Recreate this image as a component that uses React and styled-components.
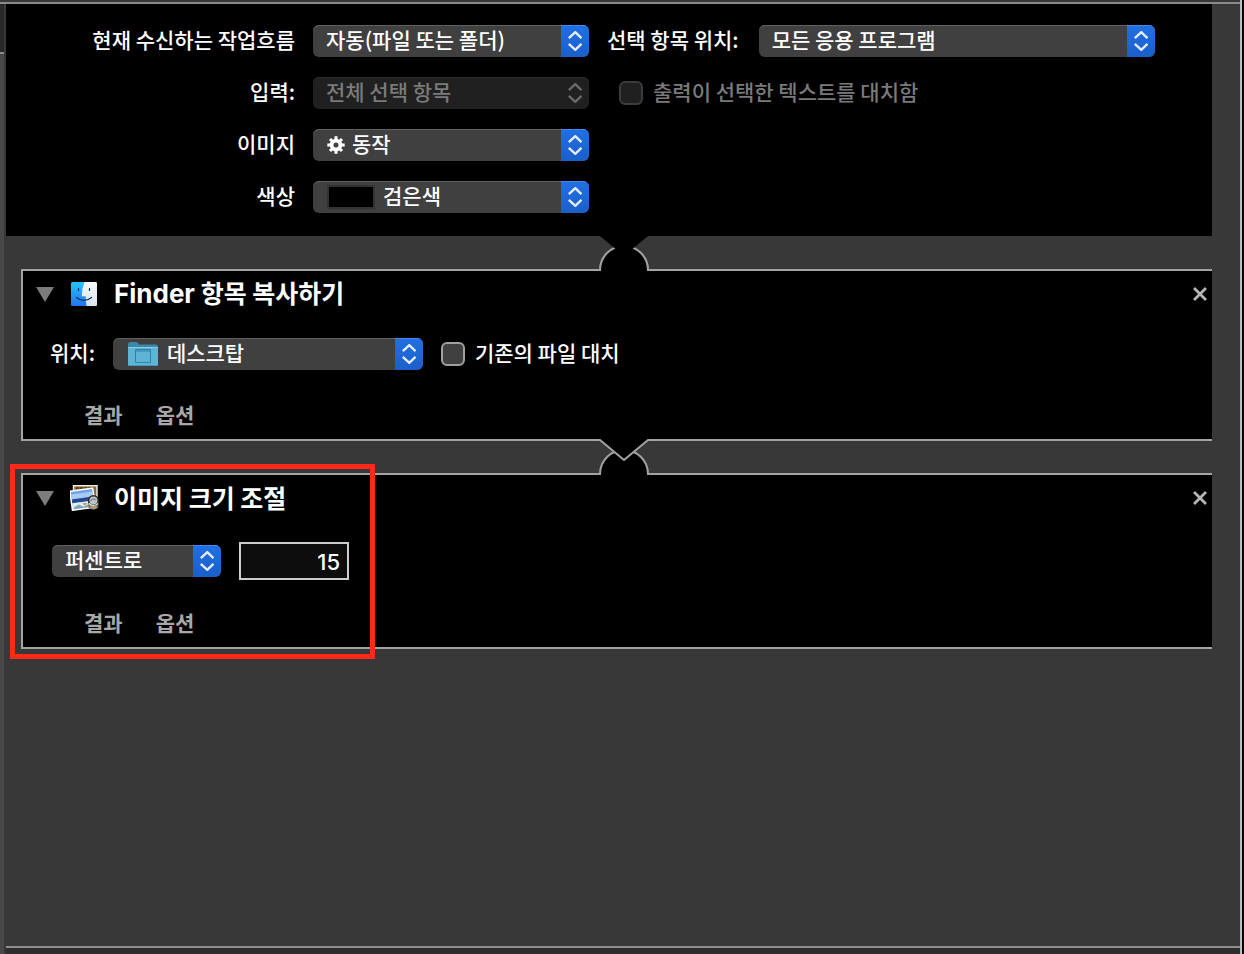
import React, { useState } from "react";
import styled, { createGlobalStyle, css } from "styled-components";

const GlobalStyle = createGlobalStyle`
  * {
    box-sizing: border-box;
  }
  body {
    margin: 0;
    background: #383838;
    color: #fff;
    font-family: "Noto Sans CJK KR", "Noto Sans", sans-serif;
    font-size: 21px;
    font-weight: 500;
    line-height: 32px;
  }
  button, input, select {
    font: inherit;
    color: inherit;
    margin: 0;
  }
`;

const Page = styled.div`
  display: flex;
  min-height: 100vh;
`;

const Window = styled.div`
  flex: 1;
  min-width: 0;
  display: flex;
  flex-direction: column;
`;

const TopEdge = styled.div`
  height: 4px;
  background: #363636;
  border-bottom: 2px solid #8a8a8a;
`;

const Body = styled.div`
  flex: 1;
  display: flex;
`;

const Rail = styled.div`
  width: 6px;
  display: flex;
  flex-direction: column;
  background: #484848;
  border-right: 2px solid #383838;
`;

const RailHead = styled.div`
  height: 50px;
  background: #282828;
  border-bottom: 2px solid #8a8a8a;
`;

const Canvas = styled.main`
  flex: 1;
  min-width: 0;
  display: flex;
  flex-direction: column;
  background: #383838;
`;

const StatusBar = styled.div`
  height: 8px;
  margin-top: auto;
  background: #2d2d2d;
  border-top: 2px solid #8f8f8f;
`;

const RightEdge = styled.div`
  width: 4px;
  background: #050607;
  border-left: 2px solid #bdbdbd;
`;

const Settings = styled.section`
  display: grid;
  grid-template-columns: 289px 276px 1fr;
  gap: 20px 18px;
  margin-right: 28px;
  padding: 21px 0 23px;
  background: #000;
`;

const FieldLabel = styled.label`
  height: 32px;
  line-height: 28px;
  text-align: ${(p) => (p.$right ? "right" : "left")};
  white-space: nowrap;
`;

const Inline = styled.div`
  display: flex;
  align-items: center;
  gap: 20px;
  padding-left: ${(p) => p.$indent || 0}px;
`;

const SelectBox = styled.div`
  position: relative;
  width: ${(p) => p.$width}px;
  height: 32px;
  border-radius: 6px;
  overflow: hidden;
  background: ${(p) => (p.$disabled ? "#202020" : "#404040")};
  box-shadow: inset 0 1px 0 ${(p) => (p.$disabled ? "#2c2c2c" : "#606060")};
`;

const NativeSelect = styled.select`
  appearance: none;
  display: block;
  width: 100%;
  height: 34px;
  margin-top: -2px;
  padding: 0 30px 2px ${(p) => p.$left}px;
  border: none;
  outline: none;
  background: transparent;
  &:disabled {
    color: #7a7a7a;
    opacity: 1;
  }
`;

const Leading = styled.span`
  position: absolute;
  left: 14px;
  top: 0;
  height: 32px;
  display: flex;
  align-items: center;
  pointer-events: none;
`;

const Cap = styled.span`
  position: absolute;
  right: 0;
  top: 0;
  width: 28px;
  height: 32px;
  display: flex;
  align-items: center;
  justify-content: center;
  pointer-events: none;
  color: #6a6a6a;
  ${(p) =>
    !p.$disabled &&
    css`
      color: #e6eefb;
      background: linear-gradient(#2170e4, #1b5fc9);
      box-shadow: inset 0 1px 0 #4588ea;
    `}
`;

const Swatch = styled.span`
  width: 48px;
  height: 24px;
  border: 2px solid #333;
  background: #000;
`;

const CheckLabel = styled.label`
  display: flex;
  align-items: center;
  gap: 10px;
  white-space: nowrap;
  color: ${(p) => (p.$disabled ? "#7a7a7a" : "#fff")};
`;

const CheckText = styled.span`
  height: 32px;
  line-height: 28px;
`;

const CheckInput = styled.input`
  appearance: none;
  width: 24px;
  height: 24px;
  border: 2px solid #a0a0a0;
  border-radius: 6px;
  background: #404040;
  &:checked {
    background: #1f6be0;
  }
  &:disabled {
    border-color: #3c3c3c;
    background: #202020;
  }
`;

const Connector = styled.div`
  position: relative;
  height: ${(p) => p.$height}px;
  svg {
    position: absolute;
    left: 50%;
    bottom: -2px;
    margin-left: -24px;
    z-index: 1;
  }
`;

const Card = styled.section`
  position: relative;
  margin: 0 28px 0 15px;
  padding-bottom: 7px;
  border: 2px solid #a3a3a3;
  border-right: none;
  background: #000;
`;

const CardHeader = styled.header`
  display: flex;
  align-items: center;
  height: 46px;
  padding: 0 5px 0 13px;
`;

const IconButton = styled.button`
  display: flex;
  padding: 0;
  border: none;
  background: none;
`;

const IconSlot = styled.span`
  display: flex;
  width: 30px;
  margin: 0 14px 0 16px;
`;

const Title = styled.h2`
  flex: 1;
  margin: 0;
  padding-bottom: 2px;
  font-size: 25px;
  font-weight: 700;
`;

const Latin = styled.span`
  font-family: Inter, sans-serif;
  font-size: 26px;
`;

const CardRow = styled.div`
  display: flex;
  align-items: center;
  gap: 18px;
  margin-top: 21px;
  padding-left: ${(p) => p.$indent}px;
`;

const CardFooter = styled.footer`
  display: flex;
  gap: 33px;
  margin-top: ${(p) => p.$gap}px;
  padding-left: 61px;
`;

const TextButton = styled.button`
  height: 32px;
  padding: 0 0 4px;
  border: none;
  background: none;
  color: #a8a8a8;
  font-weight: 700;
  line-height: 28px;
`;

const NumberInput = styled.input`
  width: 110px;
  height: 38px;
  padding: 2px 7px 0;
  border: 2px solid #cdcdcd;
  outline: none;
  background: #0d0d0d;
  font-family: Inter, sans-serif;
  font-size: 22px;
  text-align: right;
`;

const Highlight = styled.div`
  position: absolute;
  left: -13px;
  top: -11px;
  bottom: -12px;
  width: 365px;
  border: 5px solid #fd2a1c;
  pointer-events: none;
  z-index: 2;
`;

const Arrows = () => (
  <svg width="14" height="20" viewBox="0 0 14 20" fill="none" stroke="currentColor" strokeWidth="2.4">
    <path d="M.8 7.200 7.300 1.200l6.200 6M.8 12.800l6.500 6 6.200-6" />
  </svg>
);

const Gear = () => (
  <svg width="18" height="18" viewBox="0 0 18 18">
    <g stroke="#fff" strokeWidth="3">
      <path d="M9 .3v4M9 13.700v4M.3 9h4M13.700 9h4M3 3l2.800 2.800M12.200 12.200 15 15M15 3l-2.800 2.800M5.800 12.200 3 15" />
    </g>
    <circle cx="9" cy="9" r="4.400" fill="none" stroke="#fff" strokeWidth="3.800" />
  </svg>
);

const Folder = () => (
  <svg width="31" height="24" viewBox="-1 0 31 24">
    <path d="M0 2.500Q0 0 2 0h6q1.400 0 2 1l1 1.400H28q2 0 2 2V8H0z" fill="#3f87a8" />
    <rect y="5" width="30" height="19" rx="1.200" fill="#5fb4d6" />
    <path d="M0 5.500h30" stroke="#86cde8" />
    <path d="M0 23.500h30" stroke="#4797bb" />
    <path d="M7.500 7.500h15v13h-15zM7.500 9h15" fill="none" stroke="#2f81a8" />
  </svg>
);

const Finder = () => (
  <svg width="27" height="24" viewBox="-1 0 27 24">
    <defs>
      <linearGradient id="finderBlue" x2="0" y2="1">
        <stop offset="0" stopColor="#25c4fb" />
        <stop offset="1" stopColor="#2273ee" />
      </linearGradient>
      <linearGradient id="finderWhite" x2="0" y2="1">
        <stop offset="0" stopColor="#f7f8fb" />
        <stop offset="1" stopColor="#d8e2ee" />
      </linearGradient>
    </defs>
    <rect width="26" height="24" rx="1.500" fill="url(#finderBlue)" />
    <path d="M13.500 0H24.500q1.500 0 1.500 1.500v21q0 1.500-1.500 1.500H15.500q-1-4.500-.8-9.800H10.800Q11 6 13.500 0z" fill="url(#finderWhite)" />
    <path d="M7.500 6v3M18.500 6v3" stroke="#17304f" strokeWidth="1.200" />
    <path d="M5 15.200q8 6.400 16 0" fill="none" stroke="#17304f" strokeWidth="1.200" />
  </svg>
);

const Photos = () => (
  <svg width="30" height="26" viewBox="0 0 30 26">
    <rect x="3.500" y=".7" width="23.500" height="20" fill="#8a6a3d" stroke="#f3efe6" strokeWidth="1.400" />
    <path d="M6 3h18" stroke="#4f3515" strokeWidth="1.500" strokeDasharray="3 1" />
    <g transform="rotate(-8 12 15)">
      <rect x="1.200" y="4.800" width="23" height="19" fill="#6fa3e6" stroke="#fff" strokeWidth="1.600" />
      <path d="M2 8h21.400v5H2z" fill="#a8ccf3" />
      <path d="M2 13h21.400v4H2z" fill="#27478d" />
      <path d="M2 17h21.400v6H2z" fill="#e3ecef" />
      <path d="M3 21l5-2 5 3 5-2v3H3z" fill="#7fa6b5" />
      <path d="M12 18l5 1-3 2z" fill="#b99362" />
    </g>
    <path d="M18.500 17v5.500q5 4.500 9.800 0V17z" fill="#71634f" />
    <ellipse cx="23.400" cy="22" rx="3.500" ry="2" fill="#a99a80" />
    <circle cx="23.400" cy="15.500" r="4.800" fill="#b9c6cc" stroke="#2c2c2c" strokeWidth="1.600" />
    <path d="M20.500 16q3-4 5.500-.8" fill="none" stroke="#7d8588" strokeWidth="1.300" />
    <path d="M18.800 18.500q4.600 4 9.400 0" fill="none" stroke="#e3e0d6" strokeWidth="1.200" />
  </svg>
);

const Triangle = () => (
  <svg width="18" height="15" viewBox="0 0 18 15">
    <path d="M0 0h18L9 15z" fill="#7c7c7c" />
  </svg>
);

const Cross = () => (
  <svg width="14" height="14" viewBox="0 0 14 14">
    <path d="M1 1l12 12M13 1 1 13" stroke="#b6b6b6" strokeWidth="2.800" />
  </svg>
);

// the notch of the block above drops into the socket of the block below
const Joint = ({ outlined }) => (
  <svg width="50" height="36" viewBox="0 0 50 36" overflow="visible">
    <path d="M1 36V35a24 24 0 0 1 48 0v1z" fill="#000" />
    <path d="M1 36V35a24 24 0 0 1 48 0v1" fill="none" stroke="#a3a3a3" strokeWidth="2" />
    <path d="M1 0V1l24 20L49 1V0z" fill="#000" />
    {outlined && <path d="M0 1h1l24 20L49 1h1" fill="none" stroke="#a3a3a3" strokeWidth="2" />}
  </svg>
);

const Select = ({ id, width, options, disabled, leading, left = 13, label }) => {
  const [value, setValue] = useState(options[0]);

  return (
    <SelectBox $width={width} $disabled={disabled}>
      {leading && <Leading>{leading}</Leading>}
      <NativeSelect
        id={id}
        aria-label={label}
        $left={left}
        disabled={disabled}
        value={value}
        onChange={(e) => setValue(e.target.value)}
      >
        {options.map((o) => (
          <option key={o}>{o}</option>
        ))}
      </NativeSelect>
      <Cap $disabled={disabled}>
        <Arrows />
      </Cap>
    </SelectBox>
  );
};

const Check = ({ children, disabled }) => (
  <CheckLabel $disabled={disabled}>
    <CheckInput type="checkbox" disabled={disabled} />
    <CheckText>{children}</CheckText>
  </CheckLabel>
);

const Action = ({ icon, title, indent, footerGap, highlighted, children }) => (
  <Card>
    <CardHeader>
      <IconButton aria-expanded="true">
        <Triangle />
      </IconButton>
      <IconSlot>{icon}</IconSlot>
      <Title>{title}</Title>
      <IconButton>
        <Cross />
      </IconButton>
    </CardHeader>
    <CardRow $indent={indent}>{children}</CardRow>
    <CardFooter $gap={footerGap}>
      <TextButton>결과</TextButton>
      <TextButton>옵션</TextButton>
    </CardFooter>
    {highlighted && <Highlight />}
  </Card>
);

const App = () => {
  const [percent, setPercent] = useState("15");

  return (
    <Page>
      <GlobalStyle />
      <Window>
        <TopEdge />
        <Body>
          <Rail>
            <RailHead />
          </Rail>
          <Canvas>
            <Settings>
              <FieldLabel $right htmlFor="receives">현재 수신하는 작업흐름</FieldLabel>
              <Select id="receives" width={276} options={["자동(파일 또는 폴더)"]} />
              <Inline>
                <FieldLabel htmlFor="location">선택 항목 위치:</FieldLabel>
                <Select id="location" width={396} options={["모든 응용 프로그램"]} />
              </Inline>

              <FieldLabel $right htmlFor="input">입력:</FieldLabel>
              <Select id="input" width={276} disabled options={["전체 선택 항목"]} />
              <Inline $indent={12}>
                <Check disabled>출력이 선택한 텍스트를 대치함</Check>
              </Inline>

              <FieldLabel $right htmlFor="image">이미지</FieldLabel>
              <Select id="image" width={276} left={39} leading={<Gear />} options={["동작"]} />
              <div />

              <FieldLabel $right htmlFor="color">색상</FieldLabel>
              <Select id="color" width={276} left={70} leading={<Swatch />} options={["검은색"]} />
            </Settings>

            <Connector $height={33}>
              <Joint />
            </Connector>

            <Action
              icon={<Finder />}
              title={<><Latin>Finder</Latin> 항목 복사하기</>}
              indent={27}
              footerGap={30}
            >
              <FieldLabel htmlFor="folder">위치:</FieldLabel>
              <Select id="folder" width={310} left={54} leading={<Folder />} options={["데스크탑"]} />
              <Check>기존의 파일 대치</Check>
            </Action>

            <Connector $height={32}>
              <Joint outlined />
            </Connector>

            <Action icon={<Photos />} title="이미지 크기 조절" indent={29} footerGap={28} highlighted>
              <Select width={169} label="크기 조절 방식" options={["퍼센트로"]} />
              <NumberInput
                aria-label="퍼센트"
                value={percent}
                onChange={(e) => setPercent(e.target.value)}
              />
            </Action>

            <StatusBar />
          </Canvas>
        </Body>
      </Window>
      <RightEdge />
    </Page>
  );
};

export default App;
